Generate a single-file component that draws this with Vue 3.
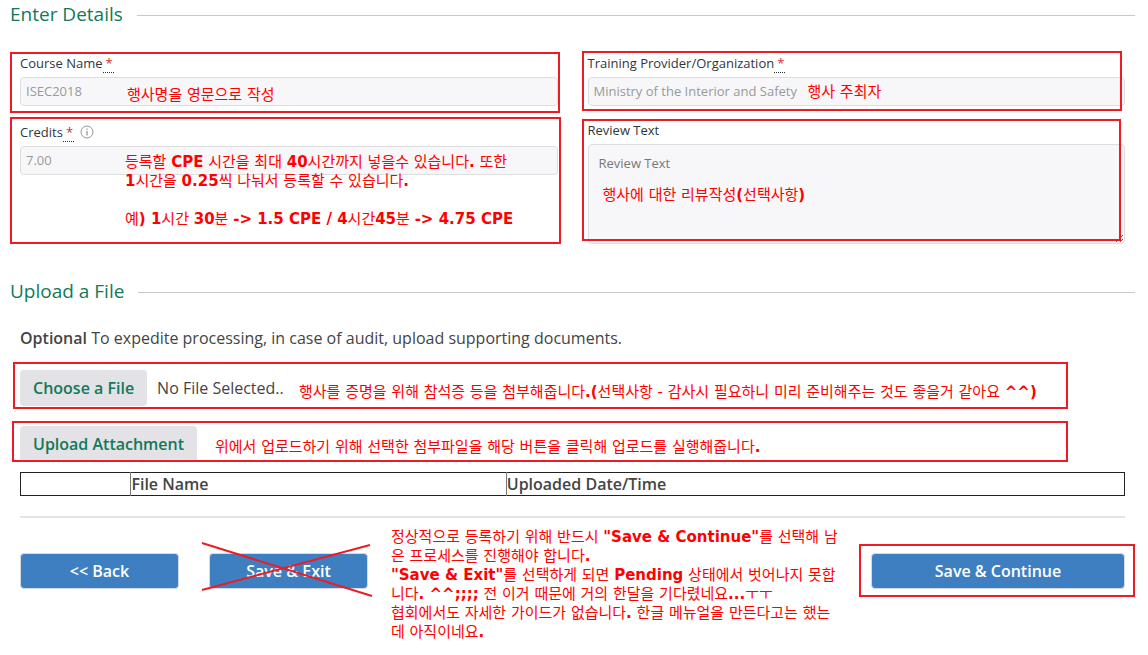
<script setup>
import { ref } from 'vue'

const course = ref('ISEC2018')
const provider = ref('Ministry of the Interior and Safety')
const credits = ref('7.00')
const review = ref('')
</script>

<template>
  <main class="page">
    <section>
      <h2 class="heading">Enter Details</h2>
      <form class="columns" @submit.prevent>
        <div class="column left">
          <div class="field">
            <label for="course">Course Name<abbr title="required">*</abbr></label>
            <input id="course" v-model="course" type="text" />
            <div class="mark mark-course"></div>
            <p class="note note-course">행사명을 영문으로 작성</p>
          </div>
          <div class="field">
            <label for="credits">Credits<abbr title="required">*</abbr>
              <svg class="info" viewBox="0 0 14 14" aria-hidden="true">
                <circle cx="7" cy="7" r="6" fill="none" stroke="#999" />
                <path d="M7 3.5v1.2M7 5.8v4.7" fill="none" stroke="#777" />
              </svg>
            </label>
            <input id="credits" v-model="credits" type="text" />
            <div class="mark mark-credits"></div>
            <p class="note note-credits">등록할 <b>CPE</b> 시간을 최대 <b>40</b>시간까지 넣을수 있습니다<b>.</b> 또한<br /><b>1</b>시간을 <b>0.25</b>씩 나눠서 등록할 수 있습니다<b>.</b><br /><br />예<b>) 1</b>시간 <b>30</b>분 <b>-&gt; 1.5 CPE / 4</b>시간<b>45</b>분 <b>-&gt; 4.75 CPE</b></p>
          </div>
        </div>
        <div class="column right">
          <div class="field">
            <label for="provider">Training Provider/Organization<abbr title="required">*</abbr></label>
            <input id="provider" v-model="provider" type="text" />
            <div class="mark mark-provider"></div>
            <p class="note note-provider">행사 주최자</p>
          </div>
          <div class="field">
            <label for="review">Review Text</label>
            <textarea id="review" v-model="review" placeholder="Review Text"></textarea>
            <div class="mark mark-review"></div>
            <p class="note note-review">행사에 대한 리뷰작성<b>(</b>선택사항<b>)</b></p>
          </div>
        </div>
      </form>
    </section>

    <section class="upload">
      <h2 class="heading">Upload a File</h2>
      <div class="body">
        <p class="lead"><strong>Optional</strong> To expedite processing, in case of audit, upload supporting documents.</p>
        <div class="row choose">
          <button type="button" class="soft">Choose a File</button>
          <span>No File Selected..</span>
          <div class="mark mark-choose"></div>
          <p class="note note-choose">행사를 증명을 위해 참석증 등을 첨부해줍니다<b>.(</b>선택사항 - 감사시 필요하니 미리 준비해주는 것도 좋을거 같아요 <b>^^)</b></p>
        </div>
        <div class="row attach">
          <button type="button" class="soft flat">Upload Attachment</button>
          <div class="mark mark-attach"></div>
          <p class="note note-attach">위에서 업로드하기 위해 선택한 첨부파일을 해당 버튼을 클릭해 업로드를 실행해줍니다<b>.</b></p>
        </div>
        <table>
          <thead>
            <tr><th class="c1"></th><th class="c2">File Name</th><th>Uploaded Date/Time</th></tr>
          </thead>
        </table>
        <hr />
        <div class="actions">
          <button type="button" class="primary">&lt;&lt; Back</button>
          <div class="exit">
            <button type="button" class="primary">Save &amp; Exit</button>
            <svg class="cross" viewBox="0 0 172 56" aria-hidden="true">
              <path d="M1 1 171 54M1 48 169 3" fill="none" stroke="#ed1c24" stroke-width="2" />
            </svg>
          </div>
          <div class="continue">
            <button type="button" class="primary">Save &amp; Continue</button>
            <div class="mark mark-continue"></div>
          </div>
          <p class="note note-actions">정상적으로 등록하기 위해 반드시 <b>"Save &amp; Continue"</b>를 선택해 남<br />은 프로세스를 진행해야 합니다<b>.</b><br /><b>"Save &amp; Exit"</b>를 선택하게 되면 <b>Pending</b> 상태에서 벗어나지 못합<br />니다<b>. ^^;;;;</b> 전 이거 때문에 거의 한달을 기다렸네요<b>...</b>ㅜㅜ<br />협회에서도 자세한 가이드가 없습니다<b>.</b> 한글 메뉴얼을 만든다고는 했는<br />데 아직이네요<b>.</b></p>
        </div>
      </div>
    </section>
  </main>
</template>

<style>
body {
  margin: 0;
  background: #fff;
}
</style>

<style scoped>
* {
  box-sizing: border-box;
}
.page {
  padding: 0 13px 64px 10px;
  font-family: "Open Sans", "Noto Sans", sans-serif;
  font-size: 16px;
  color: #444;
}
p {
  margin: 0;
}
.heading {
  display: flex;
  align-items: center;
  gap: 14px;
  margin: 0;
  font-size: 19px;
  line-height: 28px;
  font-weight: 400;
  color: #12795a;
}
.heading::after {
  content: "";
  flex: 1;
  margin-top: 2px;
  border-top: 1px solid #c8c8c8;
}
.columns {
  display: flex;
  gap: 30px;
  padding: 25px 10px 0;
}
.column {
  flex: 1;
  display: flex;
  flex-direction: column;
}
.left {
  gap: 16px;
}
.right {
  gap: 14px;
}
.field {
  position: relative;
}
label {
  display: block;
  margin-bottom: 4px;
  font-size: 13px;
  line-height: 20px;
  font-weight: 500;
  color: #30363f;
}
abbr {
  padding: 0 1px 0 3px;
  border-bottom: 1px dotted #333;
  text-decoration: none;
  color: #d0312d;
}
.info {
  width: 14px;
  height: 14px;
  margin-left: 3px;
  vertical-align: -2px;
}
label .info {
  margin-left: 6px;
}
input,
textarea {
  display: block;
  width: 100%;
  border: 1px solid #dedede;
  border-radius: 4px;
  background: #f7f7f9;
  font-family: inherit;
  font-size: 13px;
  color: #999;
}
input {
  height: 29px;
  padding: 0 5px 2px;
}
textarea {
  height: 100px;
  padding: 8px 10px;
  line-height: 20px;
}
textarea::placeholder {
  color: #777;
}
.upload {
  margin-top: 33px;
}
.body {
  padding: 19px 10px 0;
}
.lead {
  line-height: 28px;
}
strong {
  font-weight: 600;
}
.row {
  position: relative;
  display: flex;
  align-items: center;
  gap: 10px;
}
.choose {
  margin-top: 18px;
}
.attach {
  margin-top: 20px;
}
button {
  font-family: inherit;
  font-size: 16px;
  font-weight: 600;
}
.soft {
  height: 36px;
  padding: 0 13px;
  border: 0;
  border-radius: 4px;
  background: #e2e2e7;
  color: #12795a;
}
.flat {
  height: 35px;
  border-radius: 4px 4px 0 0;
}
table {
  width: 100%;
  margin-top: 11px;
  border: 1px solid #222;
  border-collapse: collapse;
  table-layout: fixed;
}
th {
  height: 23px;
  padding: 0;
  border-left: 1px solid #777;
  text-align: left;
  line-height: 22px;
  font-weight: 600;
}
.c1 {
  width: 10%;
  border-left-color: #222;
}
.c2 {
  width: 34%;
}
hr {
  margin: 20px 0 35px;
  border: 0;
  border-top: 2px solid #e2e2e7;
}
.actions {
  position: relative;
  display: grid;
  grid-template-columns: 159fr 159fr 443fr 254fr;
  column-gap: 30px;
}
.primary {
  width: 100%;
  height: 36px;
  border: 1px solid #d5dbe2;
  border-radius: 4px;
  background: #3e7fc1;
  color: #fff;
}
.exit {
  position: relative;
}
.continue {
  position: relative;
  grid-column: 4;
}
.cross {
  position: absolute;
  left: -8px;
  top: -11px;
  width: 172px;
  height: 56px;
  pointer-events: none;
}
.mark {
  position: absolute;
  border: 2px solid #ed1c24;
  pointer-events: none;
}
.mark-course {
  inset: -1px -2px -7px -10px;
}
.mark-credits {
  inset: -5px -3px -69px -10px;
}
.mark-provider {
  inset: -2px 3px -5px -6px;
}
.mark-review {
  inset: -1px 4px 3px -6px;
}
.mark-choose {
  inset: -8px 57px -3px -7px;
}
.mark-attach {
  inset: -5px 57px -1px -8px;
}
.mark-continue {
  inset: -9px -10px -8px -12px;
}
.note {
  position: absolute;
  font-family: "DejaVu Sans", "Noto Sans CJK KR", sans-serif;
  font-size: 15px;
  line-height: 19px;
  color: #f00;
  white-space: nowrap;
  pointer-events: none;
}
.note-course {
  left: 107px;
  top: 33px;
}
.note-credits {
  left: 105px;
  top: 31px;
}
.note-provider {
  left: 220px;
  top: 30px;
}
.note-review {
  left: 15px;
  top: 66px;
}
.note-choose {
  left: 279px;
  top: 13px;
}
.note-attach {
  left: 195px;
  top: 12px;
}
.note-actions {
  left: 371px;
  top: -25px;
}
</style>
